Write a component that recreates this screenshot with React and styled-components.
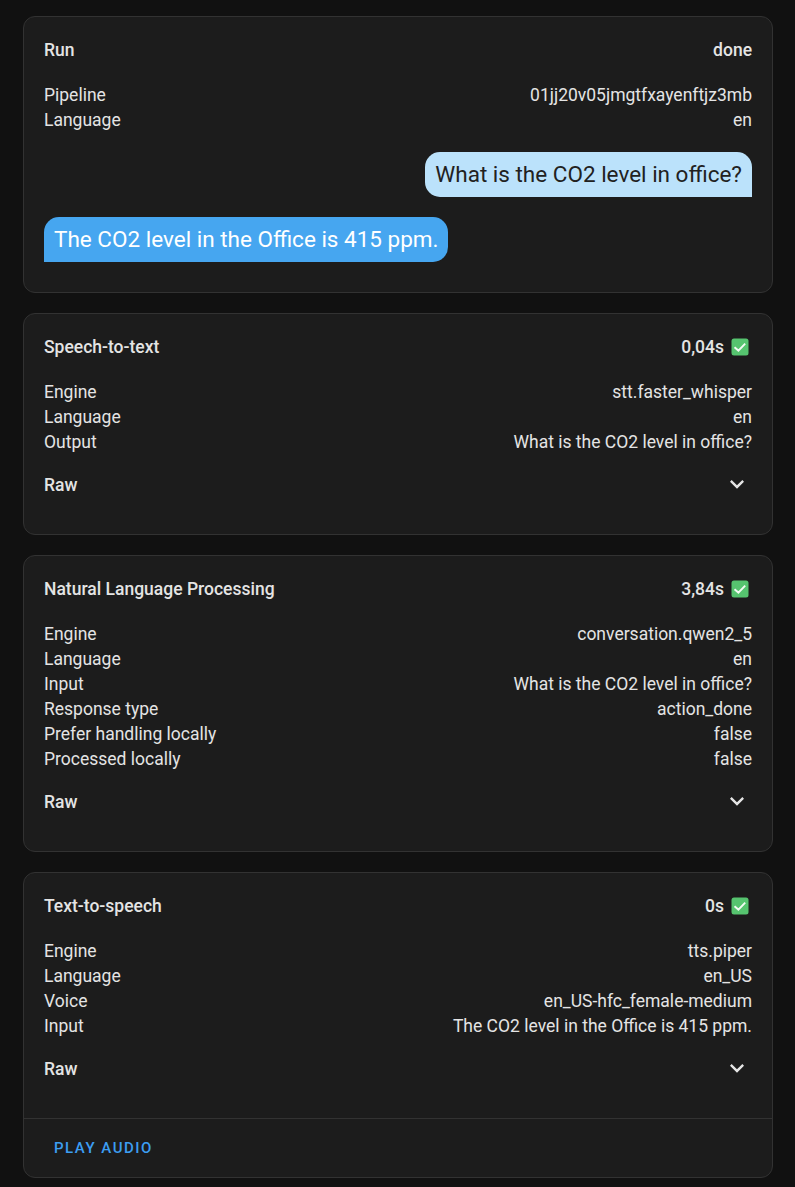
import React from "react";
import styled, { createGlobalStyle } from "styled-components";

const Global = createGlobalStyle`
  html, body { margin: 0; padding: 0; background: #111111; }
  body { font-family: Roboto, "Noto Sans", sans-serif; color: #e4e4e4; }
`;
const Page = styled.div`
  width: 750px;
  margin: 0 auto 0 23px;
  padding: 16px 0 9px;
  display: flex;
  flex-direction: column;
  gap: 20px;
`;
const Card = styled.section`
  background: #1c1c1c;
  border: 1px solid #323232;
  border-radius: 12px;
  box-sizing: border-box;
  overflow: hidden;
`;
const Body = styled.div`
  padding: 21px 20px 19px;
  display: flex;
  flex-direction: column;
  gap: 20px;
`;
const Header = styled.div`
  display: flex;
  justify-content: space-between;
  align-items: center;
  height: 25px;
  font-size: 17.5px;
  line-height: 25px;
  font-weight: 500;
`;
const Status = styled.div`
  display: flex;
  align-items: center;
  gap: 7px;
`;
const Rows = styled.div`
  display: flex;
  flex-direction: column;
`;
const Row = styled.div`
  display: flex;
  justify-content: space-between;
  font-size: 17.5px;
  line-height: 25px;
  height: 25px;
`;
const Messages = styled.div`
  display: flex;
  flex-direction: column;
  gap: 20px;
  margin-top: -1px;
  padding-bottom: 11px;
`;
const Bubble = styled.div`
  align-self: ${(p) => (p.$user ? "flex-end" : "flex-start")};
  background: ${(p) => (p.$user ? "#bbe2fb" : "#46a6f0")};
  color: ${(p) => (p.$user ? "#212121" : "#ffffff")};
  font-size: 22.5px;
  line-height: 25px;
  padding: ${(p) => (p.$user ? "10px" : "10px 9px 10px 10px")};
  border-radius: ${(p) => (p.$user ? "15px 15px 0 15px" : "15px 15px 15px 0")};
`;
const RawRowWrap = styled.div`
  padding: 0 20px;
  margin-top: -1px;
`;
const RawRow = styled.div`
  display: flex;
  justify-content: space-between;
  align-items: center;
  height: 24px;
  font-size: 17.5px;
  font-weight: 500;
  padding-bottom: 37px;
  padding-right: 1px;
`;
const Footer = styled.div`
  border-top: 1px solid #323232;
  height: 58px;
  display: flex;
  align-items: center;
  padding-left: 30px;
`;
const AudioButton = styled.button`
  all: unset;
  font-family: Roboto, sans-serif;
  font-size: 15px;
  font-weight: 500;
  letter-spacing: 1.5px;
  color: #3c9ef2;
  text-transform: uppercase;
`;
const CheckBox = styled.svg`
  margin: -2px 3px 0 0;
  flex: none;
`;
const ChevronIcon = styled.svg`
  margin-top: -2px;
  flex: none;
`;

const Check = () => (
  <CheckBox width="18" height="18" viewBox="0 0 18 18" aria-hidden="true">
    <rect x="0.5" y="0.5" width="17" height="17" rx="2.5" fill="#56c46f" />
    <path d="M3.5 9.3 L7.4 12.6 L14.2 5.6" fill="none" stroke="#f2fbf3" strokeWidth="1.9" />
  </CheckBox>
);
const Chevron = () => (
  <ChevronIcon width="28" height="28" viewBox="0 0 24 24" aria-hidden="true">
    <path d="M7.41 8.58 12 13.17l4.59-4.59L18 10l-6 6-6-6z" fill="#e4e4e4" />
  </ChevronIcon>
);

const Stage = ({ title, time, rows, footer }) => (
  <Card>
    <Body>
      <Header>
        <span>{title}</span>
        <Status>{time}<Check /></Status>
      </Header>
      <Rows>
        {rows.map(([k, v]) => (
          <Row key={k}><span>{k}</span><span>{v}</span></Row>
        ))}
      </Rows>
    </Body>
    <RawRowWrap><RawRow><span>Raw</span><Chevron /></RawRow></RawRowWrap>
    {footer && <Footer><AudioButton>Play audio</AudioButton></Footer>}
  </Card>
);

export default function App() {
  return (
    <Page>
      <Global />
      <Card>
        <Body>
          <Header><span>Run</span><span>done</span></Header>
          <Rows>
            <Row><span>Pipeline</span><span>01jj20v05jmgtfxayenftjz3mb</span></Row>
            <Row><span>Language</span><span>en</span></Row>
          </Rows>
          <Messages>
            <Bubble $user>What is the CO2 level in office?</Bubble>
            <Bubble>The CO2 level in the Office is 415 ppm.</Bubble>
          </Messages>
        </Body>
      </Card>
      <Stage title="Speech-to-text" time="0,04s" rows={[
        ["Engine", "stt.faster_whisper"],
        ["Language", "en"],
        ["Output", "What is the CO2 level in office?"],
      ]} />
      <Stage title="Natural Language Processing" time="3,84s" rows={[
        ["Engine", "conversation.qwen2_5"],
        ["Language", "en"],
        ["Input", "What is the CO2 level in office?"],
        ["Response type", "action_done"],
        ["Prefer handling locally", "false"],
        ["Processed locally", "false"],
      ]} />
      <Stage title="Text-to-speech" time="0s" footer rows={[
        ["Engine", "tts.piper"],
        ["Language", "en_US"],
        ["Voice", "en_US-hfc_female-medium"],
        ["Input", "The CO2 level in the Office is 415 ppm."],
      ]} />
    </Page>
  );
}
